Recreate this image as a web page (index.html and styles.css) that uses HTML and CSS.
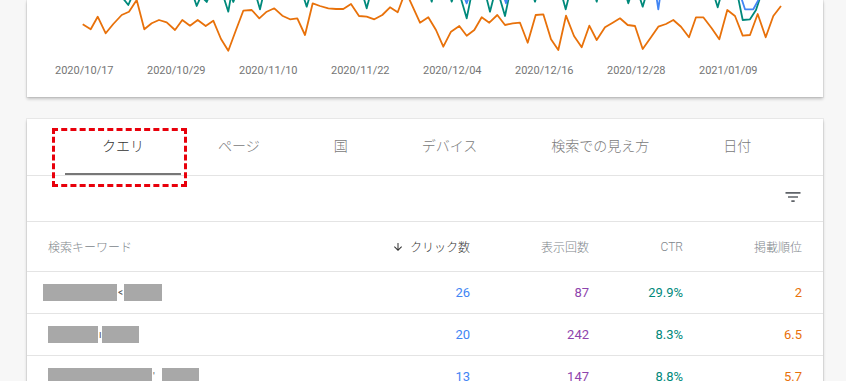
FILE: index.html
```html
<!DOCTYPE html>
<html lang="ja">
<head>
  <meta charset="UTF-8" />
  <title>検索パフォーマンス</title>
  <link rel="stylesheet" href="styles.css">
</head>
<body>

<div class="card chart-card">
  <svg class="chart" width="796" height="60" viewBox="27 0 796 60">
    <polyline class="line teal" points="118,-8 128.3,5 134,-8 192,-8 196.7,6 201,-4 206.7,2 211,-8 222,-8 228.3,11.7 231,-4 233.3,2 237,-8 255,-8 260,9.3 264,-8 302,-8 306.7,6.7 311,-8 362,-8 366.7,8.3 371,-8 429,-8 431.7,1.7 434,-8 449,-8 451.7,1.7 455,-8 459,-8 466.7,18.3 472,-8 485,-8 490,11.7 494,-4 498,-8 505,16 510,-8 532,-8 535,1.7 538,-8 561,-8 565.7,9.3 570,-8 594,-8 596.7,1.7 599,-8 625,-8 628.3,3.3 632,-8 638,-8 642.7,6.7 647,-8 713,-8 717.7,7.3 722,-8 737,-8 742.7,20 750,19.3 756,10 762,-8"/>
    <polyline class="line blue" points="463,-6 466.7,3.3 470,-6"/>
    <polyline class="line blue" points="503,-6 506,3.3 509,-6"/>
    <polyline class="line blue" points="656,-6 658.3,9.3 660.5,-6"/>
    <polyline class="line blue" points="740,-6 745,9.3 753.3,9.3 761.7,-6"/>
    <polyline class="line orange" points="82.7,24.3 90.7,29.3 97.7,16.7 105.7,33.3 113.3,24 121.7,15 129,11.7 136.7,0 144.3,29.3 151.7,23.3 159,20 166.7,22.3 175,30 182.3,20 190,25.7 197.7,20 205.7,26 213.3,20.7 221,39 228.3,50.7 236,30 243.3,10.7 251.7,10 259.3,18.3 266.7,11.7 274.3,8.3 282.3,15.7 290,19.3 297.3,18.3 305,35 312.7,3.3 320,6 328.3,8.3 336,9 343.3,9 351,4 359,16 366.7,16.7 374.3,19.3 382.3,15 390,7.3 397.7,12.3 402.3,0 406,-8 420,22.7 428.3,17.3 436,30 443.3,46.7 451,31.7 459.3,26 466.7,35.7 474.3,30 481.7,17.3 489.3,22.7 497.3,15 505,25 512.7,23.3 520,22.7 527.7,42.7 535.7,15 543.3,14.3 551,39.3 558.3,50 566,15.7 574,36 581.7,47.3 589.3,25.7 596.7,40 605,27.3 612.7,22.7 620,18.3 627.7,25 635,26 642.7,49 651,37.3 658.3,26.7 666,24 673.3,20 681,26.7 689,37.3 696,17.3 703.3,17.3 711.7,28.3 719.3,39.3 727.3,10 735,16 742.7,35.7 750,35 757.7,14 765.7,37.3 773.3,16 781,6"/>
  </svg>
  <div class="axis">
    <span>2020/10/17</span>
    <span>2020/10/29</span>
    <span>2020/11/10</span>
    <span>2020/11/22</span>
    <span>2020/12/04</span>
    <span>2020/12/16</span>
    <span>2020/12/28</span>
    <span>2021/01/09</span>
  </div>
</div>

<div class="card table-card">
  <div class="tabs">
    <div class="tab active">クエリ</div>
    <div class="tab">ページ</div>
    <div class="tab">国</div>
    <div class="tab">デバイス</div>
    <div class="tab">検索での見え方</div>
    <div class="tab">日付</div>
  </div>
  <div class="highlight"></div>

  <div class="toolbar">
    <svg class="filter-icon" width="20" height="20" viewBox="0 0 24 24">
      <path d="M10 18h4v-2h-4v2zM3 6v2h18V6H3zm3 7h12v-2H6v2z"/>
    </svg>
  </div>

  <div class="row head">
    <div class="kw">検索キーワード</div>
    <div class="num sorted">
      <svg width="12" height="12" viewBox="0 0 24 24"><path d="M20 12l-1.41-1.41L13 16.17V4h-2v12.17l-5.58-5.59L4 12l8 8 8-8z"/></svg>
      クリック数
    </div>
    <div class="num">表示回数</div>
    <div class="num">CTR</div>
    <div class="num">掲載順位</div>
  </div>

  <div class="row">
    <div class="kw shift"><span class="mask w74"></span><span class="peek">&lt;</span><span class="mask w38"></span></div>
    <div class="num clicks">26</div>
    <div class="num impr">87</div>
    <div class="num ctr">29.9%</div>
    <div class="num pos">2</div>
  </div>
  <div class="row">
    <div class="kw"><span class="mask w50"></span><span class="peek">ı</span><span class="mask w37"></span></div>
    <div class="num clicks">20</div>
    <div class="num impr">242</div>
    <div class="num ctr">8.3%</div>
    <div class="num pos">6.5</div>
  </div>
  <div class="row">
    <div class="kw"><span class="mask w104"></span><span class="peek">'</span><span class="mask w37 gap"></span></div>
    <div class="num clicks">13</div>
    <div class="num impr">147</div>
    <div class="num ctr">8.8%</div>
    <div class="num pos">5.7</div>
  </div>
</div>

</body>
</html>
```

FILE: styles.css
```css
body {
  margin: 0;
  background: #f7f7f7;
  font-family: Roboto, "Noto Sans CJK JP", sans-serif;
  color: #212121;
}
.card {
  background: #fff;
  width: 796px;
  margin: 0 23px 0 27px;
  box-shadow: 0 0 0 1px rgba(0,0,0,0.05), 0 2px 3px rgba(0,0,0,0.22);
}
.chart-card {
  padding-bottom: 15px;
}
.chart {
  display: block;
  overflow: hidden;
}
.line {
  fill: none;
  stroke-width: 1.8;
  stroke-linejoin: round;
}
.orange { stroke: #e8710a; }
.teal { stroke: #00897b; }
.blue { stroke: #4285f4; }
.axis {
  display: flex;
  padding-left: 28px;
  height: 22px;
  line-height: 22px;
  font-size: 11px;
  color: #757575;
}
.axis span {
  width: 92px;
  flex: none;
}

.table-card {
  margin-top: 22px;
  position: relative;
}
.tabs {
  display: flex;
  padding-left: 38px;
  border-bottom: 1px solid #e4e4e4;
}
.tab {
  height: 54px;
  line-height: 54px;
  padding: 0 37px;
  font-size: 14px;
  font-weight: 300;
  color: #7a7a7a;
  border-bottom: 2px solid transparent;
}
.tab.active {
  color: #333;
  border-bottom-color: #777;
}
.highlight {
  position: absolute;
  left: 25px;
  top: 9px;
  width: 129px;
  height: 53px;
  border: 3px dashed #e8000b;
}
.toolbar {
  height: 45px;
  display: flex;
  align-items: center;
  justify-content: flex-end;
  padding-right: 20px;
  border-bottom: 1px solid #e4e4e4;
}
.filter-icon {
  fill: #5f6368;
  margin-top: -4px;
}
.row {
  display: grid;
  grid-template-columns: 1fr 119px 119px 94px 119px;
  align-items: center;
  padding: 0 21px;
  height: 41px;
  border-bottom: 1px solid #e4e4e4;
  font-size: 13px;
}
.row.head {
  height: 49px;
  font-size: 12px;
  font-weight: 300;
  color: #80868b;
}
.num {
  text-align: right;
}
.sorted {
  color: #333;
  display: flex;
  align-items: center;
  justify-content: flex-end;
  gap: 4px;
}
.sorted svg {
  fill: #333;
  margin-right: 2px;
}
.kw {
  display: flex;
  align-items: center;
}
.kw.shift {
  margin-left: -5px;
}
.mask {
  display: inline-block;
  height: 17px;
  background: #a8a8a8;
}
.mask.gap { margin-left: 6px; }
.w74 { width: 74px; }
.w38 { width: 38px; }
.w50 { width: 50px; }
.w37 { width: 37px; }
.w104 { width: 104px; }
.peek {
  display: inline-block;
  padding: 0 1px;
  font-size: 10px;
  color: #555;
}
.clicks { color: #4285f4; }
.impr { color: #8e44ad; }
.ctr { color: #00897b; }
.pos { color: #e8710a; }
```
